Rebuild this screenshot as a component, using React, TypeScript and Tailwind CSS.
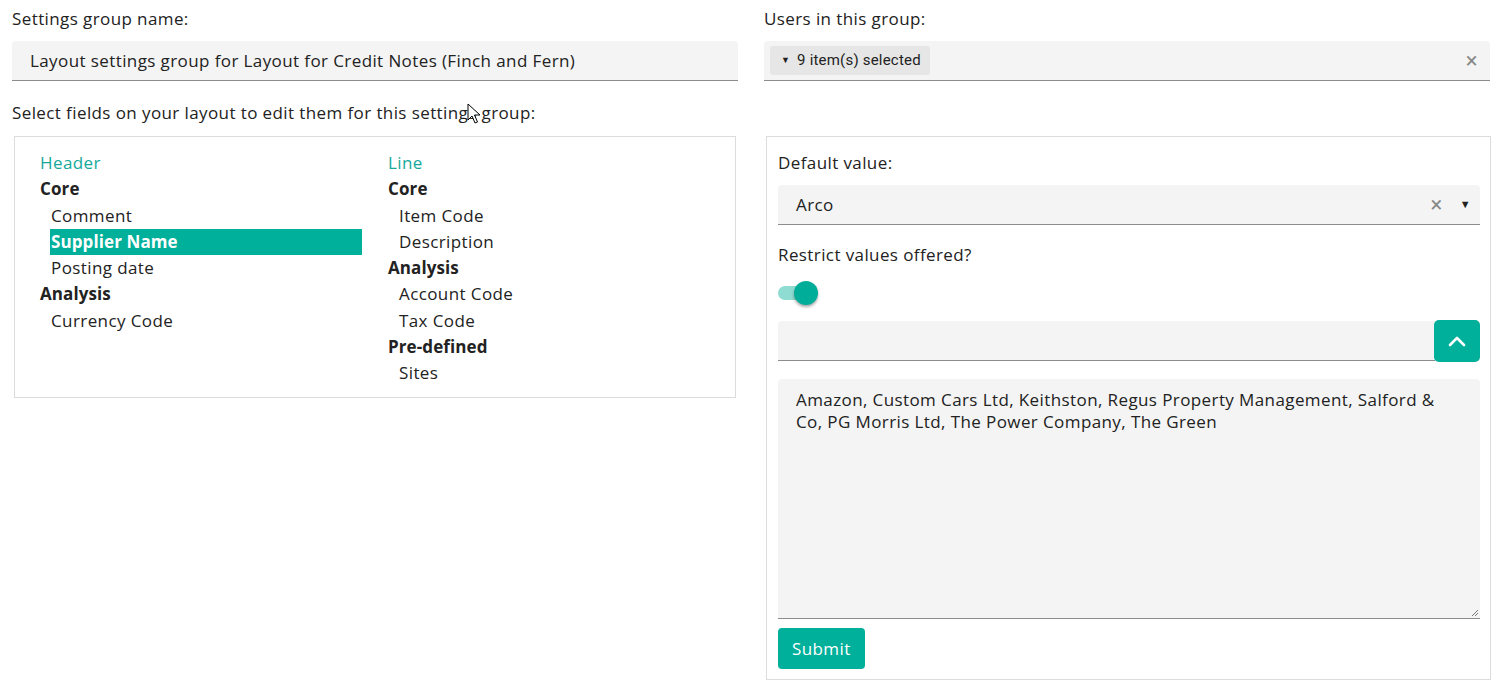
import { useState } from "react";

const font = { fontFamily: "'Open Sans', 'Noto Sans', sans-serif" };

function TreeGroup({ title, items, selected }: { title: string; items: string[]; selected?: string }) {
  return (
    <div>
      <div className="font-bold text-[#222] leading-[26.3px] tracking-[0.1px]">{title}</div>
      {items.map((it) => (
        <div
          key={it}
          className={
            it === selected
              ? "ml-[10px] pl-[1px] leading-[26.3px] bg-[#00b09b] text-white font-bold tracking-[0.1px]"
              : "ml-[11px] leading-[26.3px] text-[#222]"
          }
        >
          {it}
        </div>
      ))}
    </div>
  );
}

export default function App() {
  const [on] = useState(true);
  return (
    <div className="relative bg-white min-h-[687px] px-[12px] pt-[7px] text-[#222] text-[17px] tracking-[0.4px]" style={font}>
      <div className="grid grid-cols-2 gap-[26px]">
        {/* left column */}
        <div>
          <div className="leading-[24px]">Settings group name:</div>
          <div className="mt-[10px] h-[40px] bg-[#f4f4f4] rounded-t-[4px] border-b border-[#8c8c8c] flex items-center pl-[18px]">
            Layout settings group for Layout for Credit Notes (Finch and Fern)
          </div>
          <div className="mt-[20px] leading-[24px]">
            Select fields on your layout to edit them for this settings group:
          </div>
          <div className="mt-[11px] ml-[2px] mr-[2px] border border-[#dcdcdc] pl-[25px] pt-[13px] pb-[10px]">
            <div className="grid grid-cols-[322px_1fr] gap-[26px]">
              <div>
                <div className="text-[#14a99a] leading-[26.3px]">Header</div>
                <TreeGroup title="Core" items={["Comment", "Supplier Name", "Posting date"]} selected="Supplier Name" />
                <TreeGroup title="Analysis" items={["Currency Code"]} />
              </div>
              <div>
                <div className="text-[#14a99a] leading-[26.3px]">Line</div>
                <TreeGroup title="Core" items={["Item Code", "Description"]} />
                <TreeGroup title="Analysis" items={["Account Code", "Tax Code"]} />
                <TreeGroup title="Pre-defined" items={["Sites"]} />
              </div>
            </div>
          </div>
        </div>

        {/* right column */}
        <div>
          <div className="leading-[24px]">Users in this group:</div>
          <div className="mt-[10px] h-[40px] bg-[#f4f4f4] rounded-t-[4px] border-b border-[#8c8c8c] flex items-center pl-[6px] pr-[12px]">
            <div
              className="h-[29px] pl-[11px] pr-[9px] flex items-center gap-[7px] bg-[#e6e6e6] rounded-[3px] text-[15px] tracking-[0.2px] text-[#222]"
              style={{ fontFamily: "Roboto, sans-serif" }}
            >
              <span className="text-[9px]">▼</span>
              <span>9 item(s) selected</span>
            </div>
            <span className="ml-auto text-[#888] text-[22px] leading-none" style={{ fontFamily: "Roboto, sans-serif" }}>
              ×
            </span>
          </div>

          <div className="mt-[55px] ml-[2px] mr-[-1px] border border-[#dcdcdc] pl-[11px] pr-[10px] pt-[13px] pb-[10px]">
            <div className="leading-[26px]">Default value:</div>
            <div className="mt-[9px] h-[40px] bg-[#f4f4f4] rounded-t-[4px] border-b border-[#8c8c8c] flex items-center pl-[18px] pr-[9px]">
              <span>Arco</span>
              <span className="ml-auto text-[#888] text-[22px] leading-none" style={{ fontFamily: "Roboto, sans-serif" }}>
                ×
              </span>
              <span className="ml-[17px] text-[11px] text-[#222]">▼</span>
            </div>
            <div className="mt-[17px] leading-[26px]">Restrict values offered?</div>
            <div className="mt-[13px] h-[24px] flex items-center">
              <div className="relative w-[34px] h-[14px] rounded-full bg-[#8fdcd2]">
                <div
                  className={
                    (on ? "left-[16px] " : "left-0 ") +
                    "absolute top-[-5px] w-[24px] h-[24px] rounded-full bg-[#00ad99] shadow-[0_2px_3px_rgba(0,0,0,0.35)]"
                  }
                />
              </div>
            </div>
            <div className="mt-[16px] flex items-stretch">
              <div className="flex-1 h-[40px] bg-[#f4f4f4] rounded-tl-[4px] border-b border-[#8c8c8c]" />
              <button className="-ml-px -mt-[1px] w-[46px] h-[42px] rounded-[5px] bg-[#00b09b] flex items-center justify-center">
                <svg width="18" height="12" viewBox="0 0 18 12" fill="none">
                  <path d="M2 10 L9 3 L16 10" stroke="white" strokeWidth="2.6" strokeLinecap="round" strokeLinejoin="round" />
                </svg>
              </button>
            </div>
            <div className="mt-[17px] relative h-[240px] bg-[#f4f4f4] rounded-t-[4px] border-b border-[#8c8c8c] pl-[18px] pr-[40px] pt-[10px] leading-[22px]">
              Amazon, Custom Cars Ltd, Keithston, Regus Property Management, Salford &amp; Co, PG Morris Ltd, The Power Company, The Green
              <svg className="absolute right-[1px] bottom-[1px]" width="8" height="8" viewBox="0 0 8 8">
                <path d="M7 1 L1 7 M7 4 L4 7" stroke="#777" strokeWidth="1" />
              </svg>
            </div>
            <button className="mt-[9px] h-[41px] px-[14px] rounded-[4px] bg-[#00b09b] text-white">Submit</button>
          </div>
        </div>
      </div>

      {/* mouse pointer */}
      <svg className="absolute left-[467px] top-[103px]" width="14" height="22" viewBox="0 0 14 22">
        <path d="M1 1 L1 17 L5 13 L8 20 L10.5 19 L7.5 12 L13 12 Z" fill="white" stroke="black" strokeWidth="1" strokeLinejoin="round" />
      </svg>
    </div>
  );
}
